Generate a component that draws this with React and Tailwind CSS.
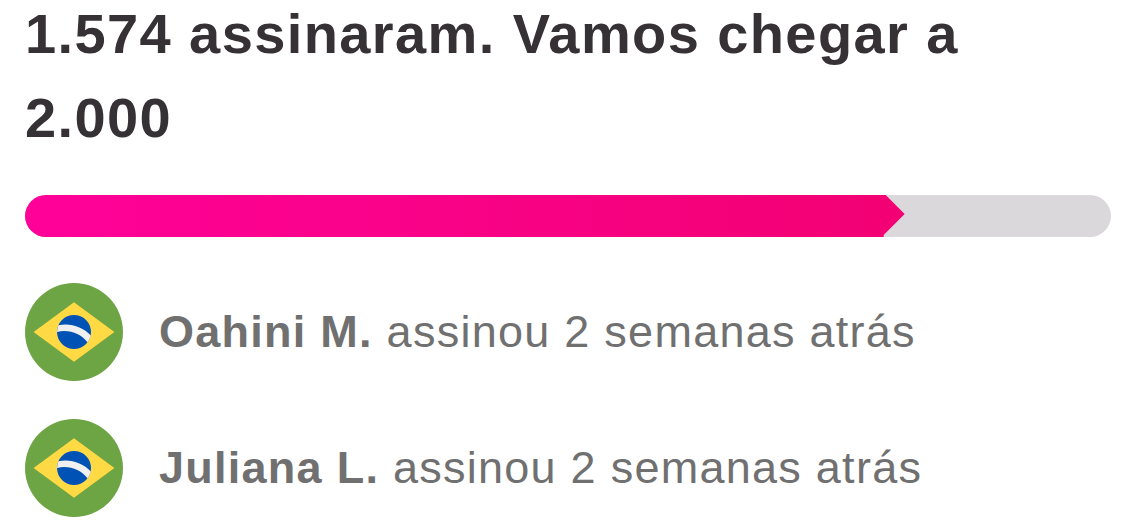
import React from 'react';

const signers = [
  { name: 'Oahini M.', when: 'assinou 2 semanas atrás' },
  { name: 'Juliana L.', when: 'assinou 2 semanas atrás' },
];

function BrazilFlag() {
  return (
    <svg viewBox="0 0 98 98" className="size-[98px] shrink-0" role="img" aria-label="Brasil">
      <circle cx="49" cy="49" r="49" fill="#6da544" />
      <path d="M49 19.200L89.400 49L49 78.800L8.600 49Z" fill="#ffda44" />
      <circle cx="49" cy="49" r="17" fill="#0052b4" />
      <path d="M33.400 42.300C45.500 39.700 57.800 44 65.800 52.400C65.200 54.900 64.100 57.100 62.500 59.200C55.500 50.700 44.500 46.100 32 48.900C32.100 46.500 32.600 44.300 33.400 42.300Z" fill="#f0f0f0" />
    </svg>
  );
}

export default function App() {
  return (
    <main className="bg-white pl-[25px] pr-3 font-['Liberation_Sans',Arial,sans-serif]">
      <h1 className="-mt-2 text-[56px] font-bold leading-[84px] tracking-wide text-[#363135]">
        1.574 assinaram. Vamos chegar a 2.000
      </h1>
      <div
        role="progressbar"
        aria-label="Assinaturas"
        aria-valuenow={1574}
        aria-valuemin={0}
        aria-valuemax={2000}
        className="mt-[35px] h-[42px] overflow-hidden rounded-full bg-[#dad8db]"
      >
        <div className="h-full w-[81%] bg-linear-to-r from-[#ff0099] to-[#f20073] [clip-path:polygon(0_0,calc(100%_-_19px)_0,100%_19px,calc(100%_-_21px)_40px,calc(100%_-_21px)_100%,0_100%)]" />
      </div>
      <ul className="mt-[46px] flex flex-col gap-[38px]">
        {signers.map((signer) => (
          <li key={signer.name} className="flex items-center gap-9 text-[45px] leading-[68px] tracking-[0.028em] text-[#707070]">
            <BrazilFlag />
            <p><strong>{signer.name}</strong> {signer.when}</p>
          </li>
        ))}
      </ul>
    </main>
  );
}
